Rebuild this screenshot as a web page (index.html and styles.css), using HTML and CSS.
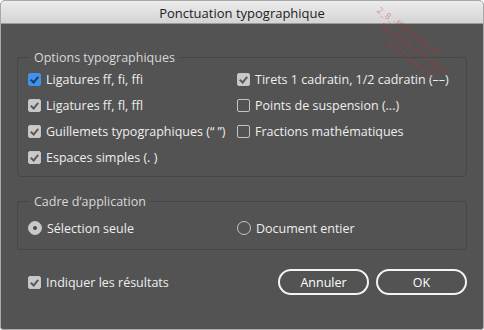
FILE: index.html
```html
<!DOCTYPE html>
<html lang="fr">

<head>
  <meta charset="UTF-8">
  <title>Ponctuation typographique</title>
  <link rel="stylesheet" href="styles.css">
</head>

<body>
  <div class="window">
    <div class="titlebar">Ponctuation typographique</div>

    <div class="content">
      <fieldset class="group options">
        <legend>Options typographiques</legend>
        <div class="grid">
          <label class="check"><span class="box blue"></span>Ligatures ff, fi, ffi</label>
          <label class="check"><span class="box on"></span>Tirets 1 cadratin, 1/2 cadratin (––)</label>
          <label class="check"><span class="box on"></span>Ligatures ff, fl, ffl</label>
          <label class="check"><span class="box"></span>Points de suspension (...)</label>
          <label class="check"><span class="box on"></span>Guillemets typographiques (“ ”)</label>
          <label class="check"><span class="box"></span>Fractions mathématiques</label>
          <label class="check"><span class="box on"></span>Espaces simples (. )</label>
        </div>
      </fieldset>

      <fieldset class="group scope">
        <legend>Cadre d’application</legend>
        <div class="grid">
          <label class="check"><span class="radio on"></span>Sélection seule</label>
          <label class="check"><span class="radio"></span>Document entier</label>
        </div>
      </fieldset>

      <div class="footer">
        <label class="check"><span class="box on"></span>Indiquer les résultats</label>
        <div class="buttons">
          <button class="btn">Annuler</button>
          <button class="btn">OK</button>
        </div>
      </div>
    </div>

    <!-- watermark of the source document -->
    <div class="watermark">
      <span>2_8_-ffa6439d-d6</span>
      <span>9d-d6cb-4761-baa</span>
      <span>4761-baa3-ef</span>
    </div>
  </div>
</body>

</html>
```

FILE: styles.css
```css
body {
  margin: 0;
  font-family: "Open Sans", "Liberation Sans", sans-serif;
  background: #ffffff;
}

.window {
  position: relative;
  width: 482px;
  height: 328px;
  border: 1px solid #a9a9a9;
  border-radius: 5px 5px 3px 3px;
  background: #535353;
  overflow: hidden;
}

.titlebar {
  height: 22px;
  line-height: 24px;
  text-align: center;
  font-size: 13px;
  color: #222;
  background: linear-gradient(#ececec, #d4d4d4);
  border-bottom: 1px solid #9a9a9a;
}

.content {
  padding: 25px 16px 0 16px;
  color: #eeeeee;
  font-size: 12.5px;
}

.group {
  margin: 0;
  padding: 0 10px 6px 10px;
  border: 1px solid #474747;
  border-radius: 4px;
}

.group legend {
  padding: 0 4px;
  margin-left: 2px;
  color: #d8d8d8;
  font-size: 12.5px;
}

.grid {
  display: grid;
  grid-template-columns: 209px 1fr;
  grid-auto-rows: 26px;
}

.scope {
  margin-top: 16px;
  padding-top: 5px;
  padding-bottom: 8px;
}

.check {
  display: flex;
  align-items: center;
  gap: 5px;
  white-space: nowrap;
}

.box {
  width: 11px;
  height: 11px;
  border: 1px solid #c4c4c4;
  border-radius: 2px;
  flex: none;
  position: relative;
}

.box.on {
  background: #c9c9c9;
}

.box.blue {
  background: #3f91ea;
  border-color: #3f91ea;
}

.box.on::after,
.box.blue::after {
  content: "";
  position: absolute;
  left: 3px;
  top: 1px;
  width: 3px;
  height: 6px;
  border: solid #5a5a5a;
  border-width: 0 2px 2px 0;
  transform: rotate(40deg);
}

.box.blue::after {
  border-color: #1e3a66;
}

.radio {
  width: 12px;
  height: 12px;
  border: 1px solid #c4c4c4;
  border-radius: 50%;
  flex: none;
  position: relative;
}

.radio.on {
  background: #c9c9c9;
}

.radio.on::after {
  content: "";
  position: absolute;
  left: 4px;
  top: 4px;
  width: 4px;
  height: 4px;
  border-radius: 50%;
  background: #4a4a4a;
}

.footer {
  display: flex;
  justify-content: space-between;
  align-items: center;
  padding: 19px 0 0 11px;
}

.buttons {
  display: flex;
  gap: 7px;
}

.btn {
  width: 91px;
  height: 26px;
  border: 2px solid #f4f4f4;
  border-radius: 13px;
  background: transparent;
  color: #ffffff;
  font-family: inherit;
  font-size: 12.5px;
}

.watermark {
  position: absolute;
  left: 380px;
  top: 4px;
  display: flex;
  flex-direction: column;
  gap: 1px;
  transform: rotate(36deg);
  transform-origin: top left;
  color: rgba(205, 40, 40, 0.45);
  font-size: 9px;
  line-height: 10px;
  letter-spacing: 0.3px;
  pointer-events: none;
}

.watermark span:nth-child(2) {
  padding-left: 12px;
}

.watermark span:nth-child(3) {
  padding-left: 26px;
}
```
